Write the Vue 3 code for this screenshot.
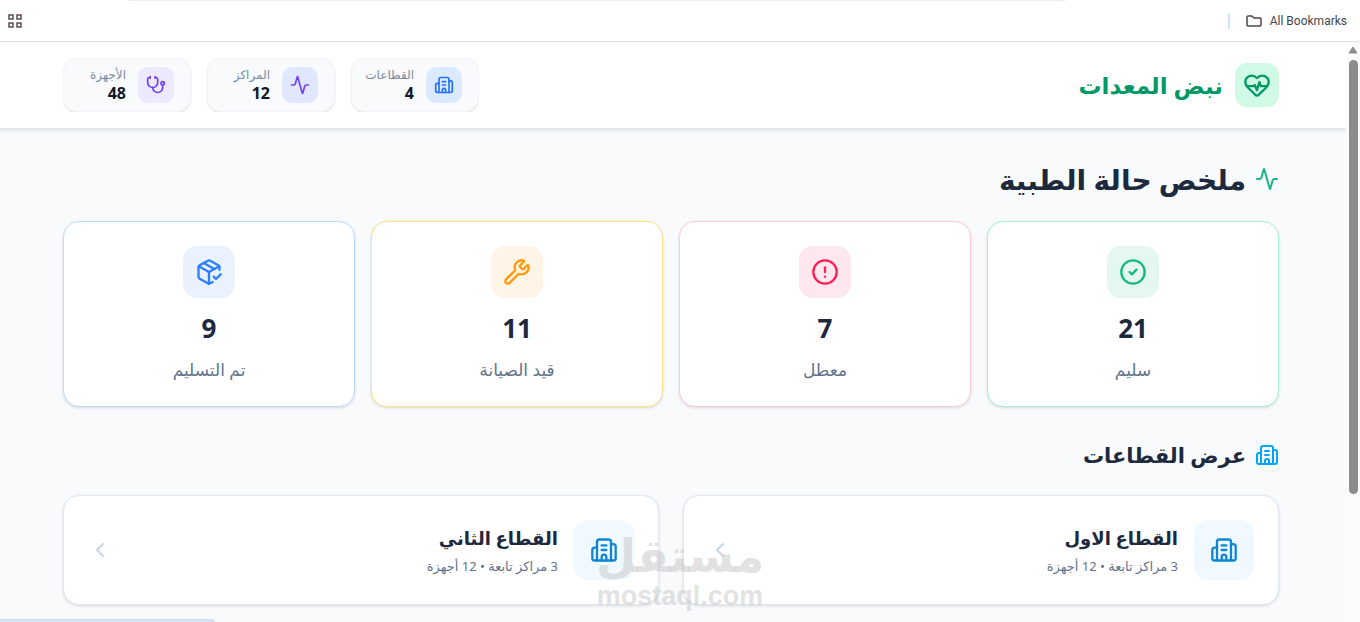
<script setup>
import { h } from 'vue'

const icons = {
  building: [
    'M10 12h4', 'M10 8h4', 'M14 21v-3a2 2 0 0 0-4 0v3',
    'M6 10H4a2 2 0 0 0-2 2v7a2 2 0 0 0 2 2h16a2 2 0 0 0 2-2V9a2 2 0 0 0-2-2h-2',
    'M6 21V5a2 2 0 0 1 2-2h8a2 2 0 0 1 2 2v16',
  ],
  activity: [
    'M22 12h-2.48a2 2 0 0 0-1.93 1.46l-2.35 8.36a.25.25 0 0 1-.48 0L9.24 2.18a.25.25 0 0 0-.48 0l-2.35 8.36A2 2 0 0 1 4.49 12H2',
  ],
  stethoscope: [
    'M11 2v2', 'M5 2v2', 'M5 3H4a2 2 0 0 0-2 2v4a6 6 0 0 0 12 0V5a2 2 0 0 0-2-2h-1',
    'M8 15a6 6 0 0 0 12 0v-3', 'M22 10a2 2 0 1 1-4 0a2 2 0 1 1 4 0',
  ],
  heart: [
    'M2 9.5a5.5 5.5 0 0 1 9.591-3.676.56.56 0 0 0 .818 0A5.49 5.49 0 0 1 22 9.5c0 2.29-1.5 4-3 5.5l-5.492 5.313a2 2 0 0 1-3 .019L5 15c-1.5-1.5-3-3.2-3-5.5',
    'M3.22 13H9.5l.5-1 2 4.5 2-7 1.5 3.5h5.27',
  ],
  check: ['M22 12a10 10 0 1 1-20 0a10 10 0 1 1 20 0', 'm9 12 2 2 4-4'],
  alert: ['M22 12a10 10 0 1 1-20 0a10 10 0 1 1 20 0', 'M12 8v4', 'M12 16h.01'],
  wrench: [
    'M14.7 6.3a1 1 0 0 0 0 1.4l1.6 1.6a1 1 0 0 0 1.4 0l3.106-3.105c.32-.322.863-.22.983.218a6 6 0 0 1-8.259 7.057l-7.91 7.91a1 1 0 0 1-2.999-3l7.91-7.91a6 6 0 0 1 7.057-8.259c.438.12.54.662.219.984z',
  ],
  package: [
    'm16 16 2 2 4-4',
    'M21 10V8a2 2 0 0 0-1-1.73l-7-4a2 2 0 0 0-2 0l-7 4A2 2 0 0 0 3 8v8a2 2 0 0 0 1 1.73l7 4a2 2 0 0 0 2 0l2-1.14',
    'm7.5 4.27 9 5.15', 'M3.29 7 12 12l8.71-5', 'M12 22V12',
  ],
  chevron: ['m15 18-6-6 6-6'],
}

const Icon = (props) =>
  h('svg', {
    width: props.size, height: props.size, viewBox: '0 0 24 24', fill: 'none',
    stroke: 'currentColor', 'stroke-width': 2, 'stroke-linecap': 'round',
    'stroke-linejoin': 'round', 'aria-hidden': 'true',
  }, icons[props.name].map((d) => h('path', { d })))
Icon.props = ['name', 'size']

const totals = [
  { label: 'القطاعات', value: 4, icon: 'building', tone: 'blue' },
  { label: 'المراكز', value: 12, icon: 'activity', tone: 'indigo' },
  { label: 'الأجهزة', value: 48, icon: 'stethoscope', tone: 'violet' },
]
const statuses = [
  { label: 'سليم', value: 21, icon: 'check', tone: 'green' },
  { label: 'معطل', value: 7, icon: 'alert', tone: 'rose' },
  { label: 'قيد الصيانة', value: 11, icon: 'wrench', tone: 'amber' },
  { label: 'تم التسليم', value: 9, icon: 'package', tone: 'azure' },
]
const sectors = [
  { name: 'القطاع الاول', info: '3 مراكز تابعة • 12 أجهزة' },
  { name: 'القطاع الثاني', info: '3 مراكز تابعة • 12 أجهزة' },
]
</script>

<template>
  <div class="window">
    <nav class="bookmarks">
      <span class="tab-edge"></span>
      <button class="tool" type="button" aria-label="Apps">
        <svg width="14" height="14" viewBox="0 0 14 14" fill="none" stroke="#5d4c52" stroke-width="1.5">
          <path d="M1 1h4v4H1zM9 1h4v4H9zM1 9h4v4H1zM9 9h4v4H9z" />
        </svg>
      </button>
      <button class="tool all" type="button">
        <svg width="16" height="12" viewBox="0 0 16 12" fill="none" stroke="#51424a" stroke-width="1.5" stroke-linejoin="round">
          <path d="M1 10V2q0-1 1-1h4l2 2h6q1 0 1 1v6q0 1-1 1H2q-1 0-1-1z" />
        </svg>
        All Bookmarks
      </button>
    </nav>

    <div class="view">
      <div class="page" dir="rtl" lang="ar">
        <header class="header">
          <div class="brand">
            <span class="brand-icon"><Icon name="heart" :size="28" /></span>
            <span class="brand-name">نبض المعدات</span>
          </div>
          <div class="totals">
            <div v-for="t in totals" :key="t.label" class="total">
              <span class="total-icon" :class="t.tone"><Icon :name="t.icon" :size="20" /></span>
              <span class="total-text">
                <span class="total-label">{{ t.label }}</span>
                <strong class="total-value">{{ t.value }}</strong>
              </span>
            </div>
          </div>
        </header>

        <main class="main">
          <h1 class="title"><Icon class="title-icon" name="activity" :size="24" />ملخص حالة الطبية</h1>
          <section class="statuses">
            <article v-for="s in statuses" :key="s.label" class="status" :class="s.tone + '-edge'">
              <span class="status-icon" :class="s.tone"><Icon :name="s.icon" :size="28" /></span>
              <strong class="status-value">{{ s.value }}</strong>
              <span class="status-label">{{ s.label }}</span>
            </article>
          </section>

          <h2 class="subtitle"><Icon class="subtitle-icon" name="building" :size="24" />عرض القطاعات</h2>
          <section class="sectors">
            <a v-for="s in sectors" :key="s.name" class="sector" href="#">
              <span class="sector-icon"><Icon name="building" :size="28" /></span>
              <span class="sector-text">
                <strong class="sector-name">{{ s.name }}</strong>
                <span class="sector-info">{{ s.info }}</span>
              </span>
              <Icon class="sector-arrow" name="chevron" :size="24" />
            </a>
          </section>
        </main>
      </div>

      <div class="scrollbar">
        <svg width="10" height="8" viewBox="0 0 10 8"><path d="M5 1 9 7H1z" fill="#8b8b8b" stroke="#8b8b8b" stroke-linejoin="round" /></svg>
        <span class="thumb"></span>
      </div>
    </div>

    <div class="watermark">
      <span class="mark-ar" lang="ar">مستقل</span>
      <span class="mark-en">mostaql.com</span>
    </div>
    <div class="link-bubble"></div>
  </div>
</template>

<style>
body { margin: 0; overflow: hidden; }
</style>

<style scoped>
.window {
  position: relative;
  display: flex;
  flex-direction: column;
  height: 100vh;
  overflow: hidden;
  background: #f8fafc;
  font-family: "Noto Sans", "DejaVu Sans", sans-serif;
  color: #1d293d;
}
.bookmarks {
  position: relative;
  display: flex;
  align-items: center;
  justify-content: space-between;
  flex: none;
  height: 41px;
  padding: 0 13px 0 8px;
  background: #fff;
  border-bottom: 1px solid #dedfe1;
}
.tab-edge {
  position: absolute;
  top: 0;
  left: 128px;
  right: 294px;
  height: 1px;
  background: #e8eefa;
}
.tool {
  display: flex;
  align-items: center;
  gap: 8px;
  padding: 0;
  border: 0;
  background: none;
  font: 12px Roboto, sans-serif;
  color: #45464a;
}
.all {
  height: 16px;
  padding-left: 16px;
  border-left: 2px solid #d3e3fd;
}
.view { display: flex; flex: 1; min-height: 0; }
.page { flex: 1; min-width: 0; overflow: hidden; }
.header {
  display: flex;
  align-items: center;
  justify-content: space-between;
  height: 86px;
  padding: 0 67px 0 63px;
  background: #fff;
  border-bottom: 1px solid #e2e8f0;
  box-shadow: 0 1px 3px rgba(15, 23, 42, .14);
}
.brand { display: flex; align-items: center; gap: 12px; }
.brand-icon {
  display: grid;
  place-items: center;
  width: 44px;
  height: 44px;
  border-radius: 12px;
  background: #d0fae5;
  color: #096;
}
.brand-name { font-size: 23px; font-weight: 700; line-height: 32px; color: #096; }
.totals { display: flex; gap: 16px; height: 54px; overflow: hidden; }
.total {
  display: flex;
  align-items: center;
  gap: 12px;
  box-sizing: border-box;
  width: 128px;
  height: 54px;
  padding: 0 16px;
  border: 1px solid #f1f5f9;
  border-radius: 14px;
  background: #f8fafc;
  box-shadow: 0 1px 2px rgba(15, 23, 42, .12);
}
.total-icon {
  display: grid;
  place-items: center;
  flex: none;
  width: 36px;
  height: 36px;
  border-radius: 10px;
}
.total-text { display: flex; flex-direction: column; white-space: nowrap; }
.total-label { font-size: 12px; line-height: 16px; color: #7c8ba1; }
.total-value { font-size: 16px; line-height: 20px; color: #0f172b; }
.blue { background: #dbeafe; color: #2472f8; }
.indigo { background: #e0e7ff; color: #7040f5; }
.violet { background: #ede9fe; color: #7040f5; }
.green { background: #e4f7f0; color: #18b981; }
.rose { background: #ffe8ed; color: #ff2056; }
.amber { background: #fff5e6; color: #fe9a0b; }
.azure { background: #eaf2ff; color: #2b7fff; }
.main { padding: 32px 67px 0 63px; }
.title, .subtitle {
  display: flex;
  align-items: center;
  gap: 9px;
  margin: 0;
  font-weight: 700;
}
.title { height: 36px; margin-bottom: 24px; font-size: 28px; }
.title-icon { color: #18b981; }
.subtitle { height: 32px; margin: 32px 0 24px; font-size: 21px; }
.subtitle-icon { color: #00a6f4; }
.statuses { display: grid; grid-template-columns: repeat(4, 1fr); gap: 16px; }
.status {
  display: flex;
  flex-direction: column;
  align-items: center;
  padding: 24px 0;
  border: 1px solid;
  border-radius: 16px;
  background: #fff;
  box-shadow: 0 1px 3px rgba(15, 23, 42, .14);
}
.green-edge { border-color: #a4f4cf; }
.rose-edge { border-color: #ffccd3; }
.amber-edge { border-color: #fee685; }
.azure-edge { border-color: #bedbff; }
.status-icon {
  display: grid;
  place-items: center;
  width: 52px;
  height: 52px;
  border-radius: 14px;
}
.status-value { margin-top: 12px; font-size: 26px; line-height: 36px; }
.status-label { margin-top: 12px; font-size: 17px; line-height: 24px; color: #62748e; }
.sectors { display: grid; grid-template-columns: repeat(2, 1fr); gap: 24px; }
.sector {
  display: flex;
  align-items: center;
  gap: 16px;
  padding: 24px;
  border: 1px solid #e2e8f0;
  border-radius: 16px;
  background: #fff;
  box-shadow: 0 1px 3px rgba(15, 23, 42, .14);
  color: inherit;
  text-decoration: none;
}
.sector-icon {
  display: grid;
  place-items: center;
  width: 60px;
  height: 60px;
  border-radius: 14px;
  background: #f0f9ff;
  color: #0f86d4;
}
.sector-text { display: flex; flex: 1; flex-direction: column; }
.sector-name { font-size: 18px; line-height: 32px; }
.sector-info { font-size: 13px; line-height: 24px; color: #62748e; }
.sector-arrow { color: #cad5e2; }
.scrollbar {
  display: flex;
  flex-direction: column;
  align-items: center;
  gap: 6px;
  flex: none;
  box-sizing: border-box;
  width: 14px;
  padding-top: 4px;
  background: #fcfcfc;
}
.thumb { width: 9px; height: 434px; border-radius: 5px; background: #8b8b8b; }
.watermark {
  position: absolute;
  left: 50%;
  bottom: 10px;
  display: flex;
  flex-direction: column;
  align-items: center;
  transform: translateX(-50%);
  color: rgba(190, 190, 190, .45);
  pointer-events: none;
}
.mark-ar { font: 700 46px/48px "DejaVu Sans", sans-serif; }
.mark-en { font: 700 27px/32px "Liberation Sans", sans-serif; }
.link-bubble {
  position: absolute;
  left: 0;
  bottom: 0;
  width: 215px;
  height: 3px;
  border-top: 1px solid #d5dbe3;
  border-radius: 0 4px 0 0;
  background: #d3e3fd;
  box-sizing: border-box;
}
</style>
